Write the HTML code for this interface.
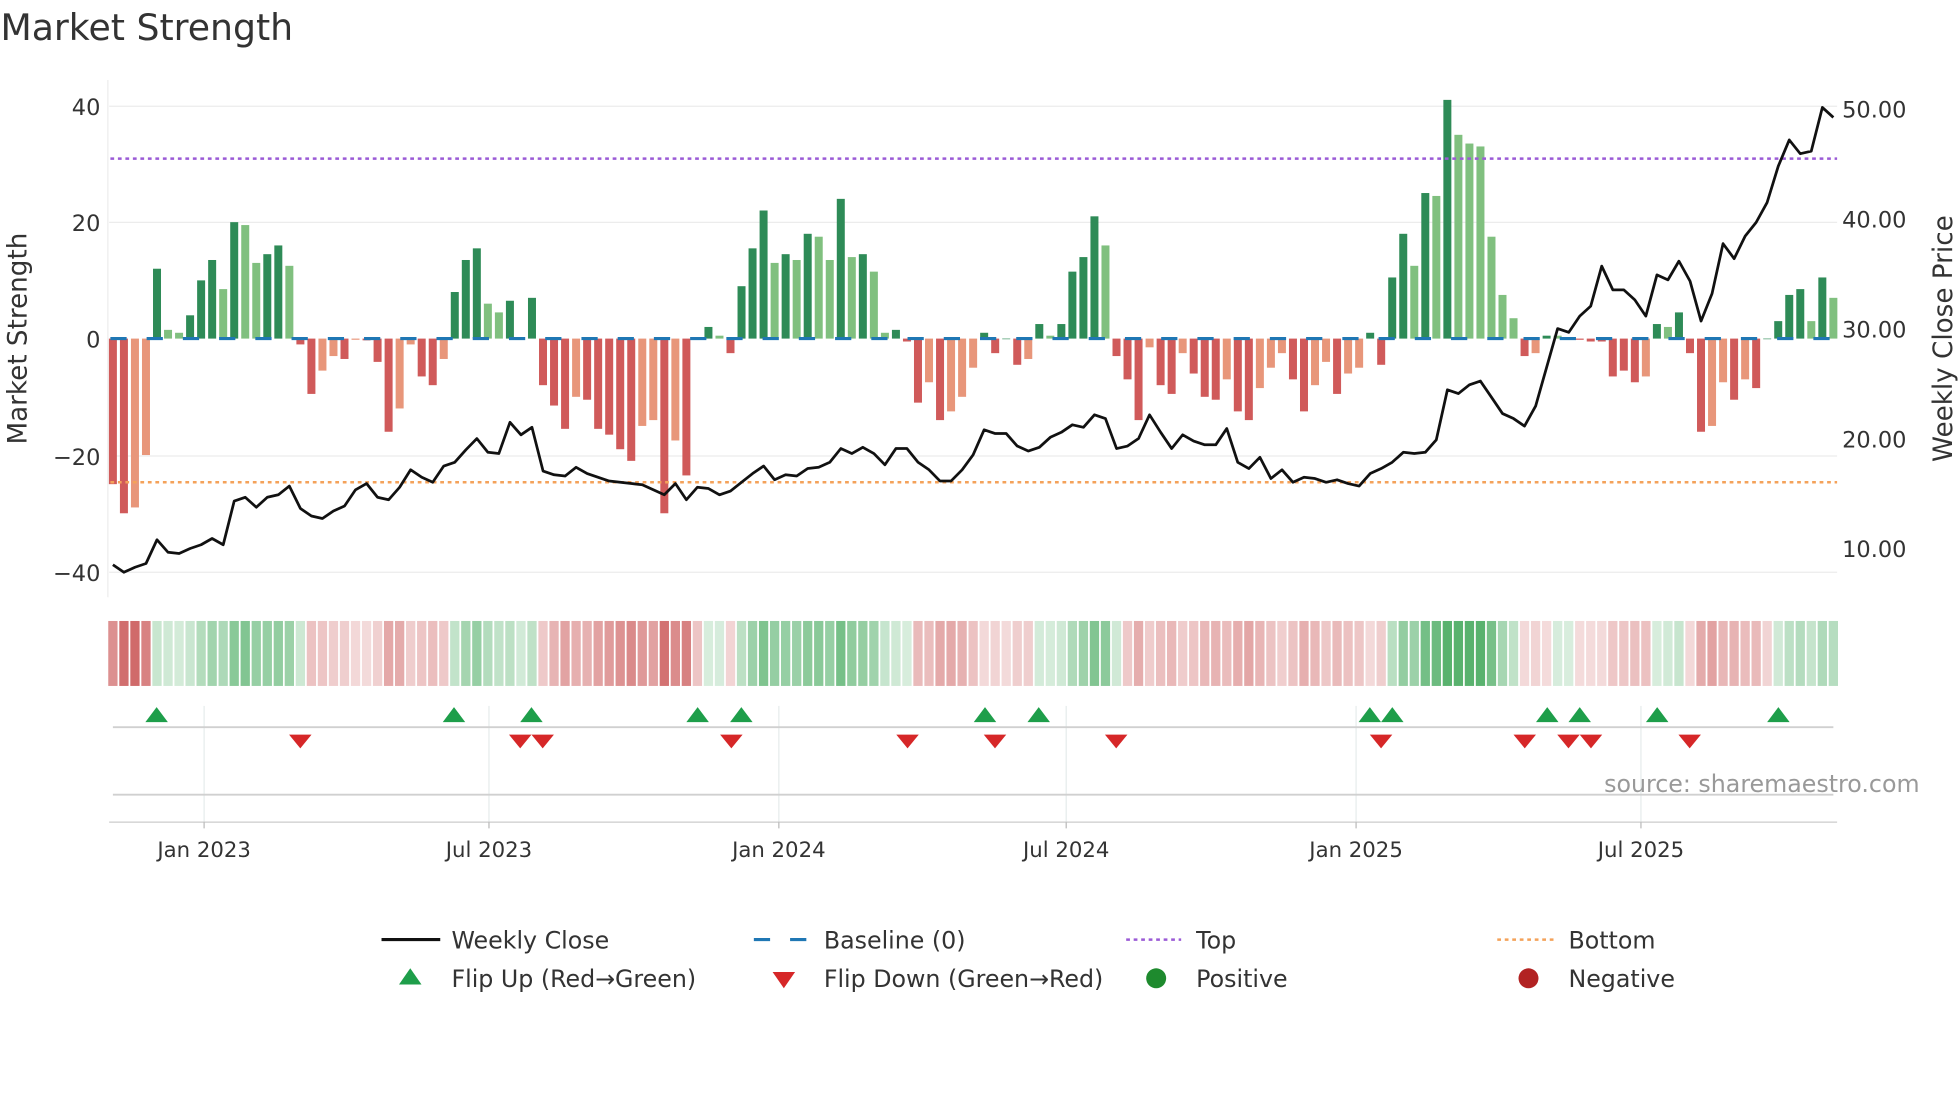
<!DOCTYPE html>
<html><head><meta charset="utf-8">
<style>
html,body{margin:0;padding:0;background:#fff;}
svg{display:block;font-family:"DejaVu Sans","Liberation Sans",sans-serif;}
</style></head>
<body>
<svg id="c" width="1960" height="1102" viewBox="0 0 1568 882" xmlns="http://www.w3.org/2000/svg">
<rect width="1568" height="882" fill="#fff"/>
<text x="0" y="32" font-size="29" fill="#333">Market Strength</text>
<g id="grid" stroke="#ececec" stroke-width="1">
<line x1="87" y1="85" x2="1470" y2="85"/><line x1="87" y1="178" x2="1470" y2="178"/>
<line x1="87" y1="365" x2="1470" y2="365"/><line x1="87" y1="458" x2="1470" y2="458"/>
<line x1="86" y1="64" x2="86" y2="478"/>
</g>
<g font-size="18" fill="#333" text-anchor="end">
<text x="80" y="92">40</text><text x="80" y="185">20</text><text x="80" y="278">0</text>
<text x="80" y="372">−20</text><text x="80" y="465">−40</text>
</g>
<g font-size="18" fill="#333">
<text x="1474" y="94">50.00</text><text x="1474" y="182">40.00</text><text x="1474" y="270">30.00</text>
<text x="1474" y="358">20.00</text><text x="1474" y="446">10.00</text>
</g>
<text transform="translate(21,271) rotate(-90)" font-size="21" fill="#333" text-anchor="middle">Market Strength</text>
<text transform="translate(1562,271) rotate(-90)" font-size="21" fill="#333" text-anchor="middle">Weekly Close Price</text>
<g id="bars"></g>
<line x1="88" y1="271" x2="1470" y2="271" stroke="#1f77b4" stroke-width="2.5" stroke-dasharray="13,16"/>
<line x1="88" y1="127" x2="1470" y2="127" stroke="#9b5bd6" stroke-width="2" stroke-dasharray="3,3"/>
<line x1="88" y1="386" x2="1470" y2="386" stroke="#f4a25a" stroke-width="2" stroke-dasharray="3,3"/>
<polyline id="price" fill="none" stroke="#111" stroke-width="2.2" stroke-linejoin="round"/>
<g id="strip"></g>
<g stroke="#e6ecec" stroke-width="1">
<line x1="163" y1="565" x2="163" y2="658"/><line x1="391" y1="565" x2="391" y2="658"/>
<line x1="623" y1="565" x2="623" y2="658"/><line x1="853" y1="565" x2="853" y2="658"/>
<line x1="1085" y1="565" x2="1085" y2="658"/><line x1="1313" y1="565" x2="1313" y2="658"/>
</g>
<line x1="90" y1="582" x2="1467" y2="582" stroke="#d0d0d0" stroke-width="1.5"/>
<line x1="90" y1="636" x2="1467" y2="636" stroke="#d0d0d0" stroke-width="1.5"/>
<line x1="87" y1="658" x2="1470" y2="658" stroke="#ccc" stroke-width="1"/>
<g stroke="#bbb"><line x1="163" y1="658" x2="163" y2="663"/><line x1="391" y1="658" x2="391" y2="663"/><line x1="623" y1="658" x2="623" y2="663"/><line x1="853" y1="658" x2="853" y2="663"/><line x1="1085" y1="658" x2="1085" y2="663"/><line x1="1313" y1="658" x2="1313" y2="663"/></g>
<g id="marks"></g>
<g font-size="17" fill="#333" text-anchor="middle">
<text x="163" y="686">Jan 2023</text><text x="391" y="686">Jul 2023</text><text x="623" y="686">Jan 2024</text>
<text x="853" y="686">Jul 2024</text><text x="1085" y="686">Jan 2025</text><text x="1313" y="686">Jul 2025</text>
</g>
<text x="1536" y="634" font-size="19" fill="#999" text-anchor="end">source: sharemaestro.com</text>
<g font-size="19" fill="#333">
<line x1="305" y1="752" x2="352" y2="752" stroke="#111" stroke-width="2.5"/>
<text x="361" y="759">Weekly Close</text>
<line x1="603" y1="752" x2="647" y2="752" stroke="#1f77b4" stroke-width="2.5" stroke-dasharray="13,16"/>
<text x="659" y="759">Baseline (0)</text>
<line x1="901" y1="752" x2="945" y2="752" stroke="#9b5bd6" stroke-width="2" stroke-dasharray="3,3"/>
<text x="957" y="759">Top</text>
<line x1="1198" y1="752" x2="1243" y2="752" stroke="#f4a25a" stroke-width="2" stroke-dasharray="3,3"/>
<text x="1255" y="759">Bottom</text>
<polygon points="319,788 337,788 328,775" fill="#1e9e4a"/>
<text x="361" y="790">Flip Up (Red→Green)</text>
<polygon points="618,778 636,778 627,791" fill="#d62728"/>
<text x="659" y="790">Flip Down (Green→Red)</text>
<circle cx="925" cy="783" r="8" fill="#1e8a2e"/>
<text x="957" y="790">Positive</text>
<circle cx="1223" cy="783" r="8" fill="#b22222"/>
<text x="1255" y="790">Negative</text>
</g>
</svg>
<script>
var NS="http://www.w3.org/2000/svg";
var d=[[-25,'R'],[-30,'R'],[-29,'S'],[-20,'S'],[12,'D'],[1.5,'L'],[1,'L'],[4,'D'],[10,'D'],[13.5,'D'],[8.5,'L'],[20,'D'],[19.5,'L'],[13,'L'],[14.5,'D'],[16,'D'],[12.5,'L'],[-1,'R'],[-9.5,'R'],[-5.5,'S'],[-3,'S'],[-3.5,'R'],[-0.2,'S'],[-0.3,'R'],[-4,'R'],[-16,'R'],[-12,'S'],[-1,'S'],[-6.5,'R'],[-8,'R'],[-3.5,'S'],[8,'D'],[13.5,'D'],[15.5,'D'],[6,'L'],[4.5,'L'],[6.5,'D'],[0,'D'],[7,'D'],[-8,'R'],[-11.5,'R'],[-15.5,'R'],[-10,'S'],[-10.5,'R'],[-15.5,'R'],[-16.5,'R'],[-19,'R'],[-21,'R'],[-15,'S'],[-14,'S'],[-30,'R'],[-17.5,'S'],[-23.5,'R'],[0,'D'],[2,'D'],[0.5,'L'],[-2.5,'R'],[9,'D'],[15.5,'D'],[22,'D'],[13,'L'],[14.5,'D'],[13.5,'L'],[18,'D'],[17.5,'L'],[13.5,'L'],[24,'D'],[14,'L'],[14.5,'D'],[11.5,'L'],[1,'L'],[1.5,'D'],[-0.5,'R'],[-11,'R'],[-7.5,'S'],[-14,'R'],[-12.5,'S'],[-10,'S'],[-5,'S'],[1,'D'],[-2.5,'R'],[0,'D'],[-4.5,'R'],[-3.5,'S'],[2.5,'D'],[0.5,'L'],[2.5,'D'],[11.5,'D'],[14,'D'],[21,'D'],[16,'L'],[-3,'R'],[-7,'R'],[-14,'R'],[-1.5,'S'],[-8,'R'],[-9.5,'R'],[-2.5,'S'],[-6,'R'],[-10,'R'],[-10.5,'R'],[-7,'S'],[-12.5,'R'],[-14,'R'],[-8.5,'S'],[-5,'S'],[-2.5,'S'],[-7,'R'],[-12.5,'R'],[-8,'S'],[-4,'S'],[-9.5,'R'],[-6,'S'],[-5,'S'],[1,'D'],[-4.5,'R'],[10.5,'D'],[18,'D'],[12.5,'L'],[25,'D'],[24.5,'L'],[41,'D'],[35,'L'],[33.5,'L'],[33,'L'],[17.5,'L'],[7.5,'L'],[3.5,'L'],[-3,'R'],[-2.5,'S'],[0.5,'D'],[0.5,'L'],[0,'D'],[-0.2,'R'],[-0.5,'R'],[-0.5,'R'],[-6.5,'R'],[-5.5,'R'],[-7.5,'R'],[-6.5,'S'],[2.5,'D'],[2,'L'],[4.5,'D'],[-2.5,'R'],[-16,'R'],[-15,'S'],[-7.5,'S'],[-10.5,'R'],[-7,'S'],[-8.5,'R'],[0,'D'],[3,'D'],[7.5,'D'],[8.5,'D'],[3,'L'],[10.5,'D'],[7,'L']];
var py=[452,458,454,451,432,442,443,439,436,431,436,401,398,406,398,396,389,407,413,415,409,405,392,387,398,400,390,376,382,386,373,370,360,351,362,363,338,348,342,377,380,381,374,379,382,385,386,387,388,392,396,387,400,390,391,396,393,386,379,373,384,380,381,375,374,370,359,363,358,363,372,359,359,370,376,385,385,376,364,344,347,347,357,361,358,350,346,340,342,332,335,359,357,351,332,346,359,348,353,356,356,343,370,375,366,383,376,386,382,383,386,384,387,389,379,375,370,362,363,362,352,312,315,308,305,318,331,335,341,325,294,263,266,253,245,213,232,232,240,253,220,224,209,225,257,235,195,207,189,178,162,133,112,123,121,86,94];
var col={D:'#2e8b57',L:'#80c07f',R:'#d05a5a',S:'#e8967a'};
var sp=(1467-90)/156, bars=document.getElementById('bars'), strip=document.getElementById('strip');
var ema=0,pts=[];
for(var i=0;i<d.length;i++){
 var x=90+i*sp,v=d[i][0],h=Math.abs(v)*4.66;
 var r=document.createElementNS(NS,'rect');
 r.setAttribute('x',x-3.2);r.setAttribute('width',6.4);
 r.setAttribute('y',v>=0?271-h:271);r.setAttribute('height',Math.max(h,0.5));
 r.setAttribute('fill',col[d[i][1]]);bars.appendChild(r);
 ema=ema*0.25+v*0.75;
 var a=0.2+0.65*Math.min(1,Math.abs(ema)/28);
 var s=document.createElementNS(NS,'rect');
 s.setAttribute('x',x-sp/2+0.7);s.setAttribute('width',sp-1.4);s.setAttribute('y',497);s.setAttribute('height',52);
 s.setAttribute('fill',ema>=0?'rgb(60,165,85)':'rgb(200,80,80)');s.setAttribute('fill-opacity',a);strip.appendChild(s);
 pts.push(x.toFixed(1)+','+py[i]);
}
document.getElementById('price').setAttribute('points',pts.join(' '));
var m=document.getElementById('marks');
[125,363,425,558,593,788,831,1096,1114,1238,1264,1326,1423].forEach(function(x){
 var p=document.createElementNS(NS,'polygon');p.setAttribute('points',(x-9)+',578 '+(x+9)+',578 '+x+',566');p.setAttribute('fill','#1e9e4a');m.appendChild(p);});
[240,416,434,585,726,796,893,1105,1220,1255,1273,1352].forEach(function(x){
 var p=document.createElementNS(NS,'polygon');p.setAttribute('points',(x-9)+',588 '+(x+9)+',588 '+x+',599');p.setAttribute('fill','#d62728');m.appendChild(p);});
</script>
</body></html>
